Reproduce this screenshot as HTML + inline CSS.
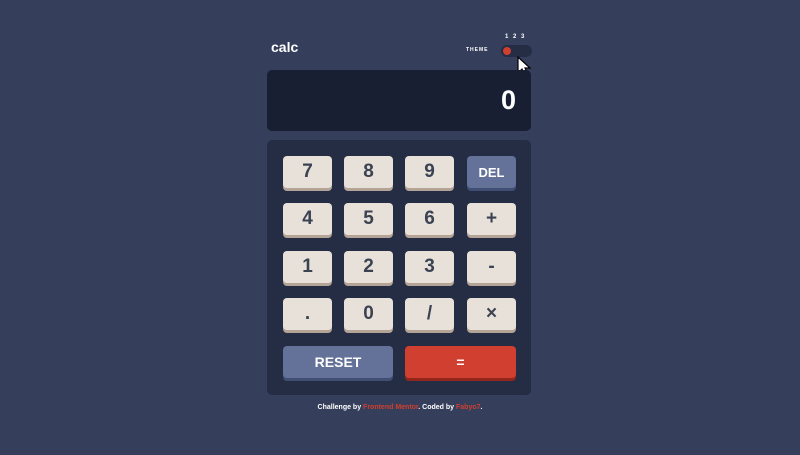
<!DOCTYPE html>
<html><head><style>
*{margin:0;padding:0;box-sizing:border-box}
body{width:800px;height:455px;background:#353f5c;font-family:"Liberation Sans",sans-serif;font-weight:bold;position:relative;overflow:hidden}
.a{position:absolute}
.k{position:absolute;width:49px;height:32px;background:#e8e1da;border-radius:4px;box-shadow:0 3px 0 #b3a497;color:#3b4252;font-size:19px;display:flex;align-items:center;justify-content:center}
.d{background:#647198;box-shadow:0 3px 0 #414e73;color:#fff;font-size:13px}
.e{background:#d03f2f;box-shadow:0 3px 0 #93261a;color:#fff;font-size:14px}
</style></head><body>
<div class="a" style="left:271px;top:39px;color:#fff;font-size:14px">calc</div>
<div class="a" style="left:466px;top:47px;color:#fff;font-size:5px;letter-spacing:1px">THEME</div>
<div class="a" style="left:505px;top:34px;color:#fff;font-size:6px;word-spacing:3px">1 2 3</div>
<div class="a" style="left:501px;top:45px;width:31px;height:12px;border-radius:6px;background:#242d44"></div>
<div class="a" style="left:503px;top:47px;width:8px;height:8px;border-radius:50%;background:#d03f2f"></div>
<svg class="a" style="left:517px;top:56px" width="15" height="22" viewBox="0 0 15 22"><path d="M1 1 L1 17 L5 13 L8 20 L11 19 L8 12 L13 12 Z" fill="#fff" stroke="#000" stroke-width="1.2"/></svg>
<div class="a" style="left:267px;top:70px;width:264px;height:61px;background:#181f33;border-radius:5px"></div>
<div class="a" style="right:284px;top:85px;color:#fff;font-size:27px">0</div>
<div class="a" style="left:267px;top:140px;width:264px;height:255px;background:#242d44;border-radius:5px"></div>
<div class="k" style="left:283px;top:156px">7</div><div class="k" style="left:344px;top:156px">8</div><div class="k" style="left:405px;top:156px">9</div><div class="k d" style="left:467px;top:156px">DEL</div>
<div class="k" style="left:283px;top:203px">4</div><div class="k" style="left:344px;top:203px">5</div><div class="k" style="left:405px;top:203px">6</div><div class="k" style="left:467px;top:203px">+</div>
<div class="k" style="left:283px;top:251px">1</div><div class="k" style="left:344px;top:251px">2</div><div class="k" style="left:405px;top:251px">3</div><div class="k" style="left:467px;top:251px">-</div>
<div class="k" style="left:283px;top:298px">.</div><div class="k" style="left:344px;top:298px">0</div><div class="k" style="left:405px;top:298px">/</div><div class="k" style="left:467px;top:298px">×</div>
<div class="k d" style="left:283px;top:346px;width:110px;font-size:14px">RESET</div>
<div class="k e" style="left:405px;top:346px;width:111px">=</div>
<div class="a" style="left:0;width:800px;top:404px;text-align:center;color:#fff;font-size:7px">Challenge by <span style="color:#d03f2f">Frontend Mentor</span>. Coded by <span style="color:#d03f2f">Fabyo7</span>.</div>
</body></html>
